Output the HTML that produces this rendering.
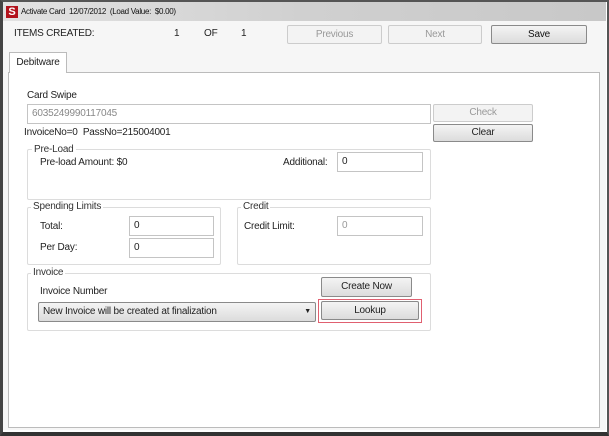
<!DOCTYPE html><html><head><style>
body{margin:0;width:609px;height:436px;overflow:hidden;background:#fff;font-family:"Liberation Sans",sans-serif;font-size:10px;letter-spacing:-0.2px;color:#222;position:relative}
.a{position:absolute;white-space:nowrap}
.btn{position:absolute;border:1px solid #8a8a8a;border-radius:2px;background:linear-gradient(#f4f4f4,#dcdcdc);text-align:center;box-sizing:border-box;font-size:10px}
.dis{border-color:#ccc;background:#f3f3f3;color:#999}
.tb{position:absolute;border:1px solid #c4c4c4;background:#fff;box-sizing:border-box;padding:0 4px;font-size:10px;line-height:18px}
.gb{position:absolute;border:1px solid #dcdcdc;border-radius:2px;box-sizing:border-box}
.gl{position:absolute;background:#fff;padding:0 2px;font-size:10px;color:#333}
</style></head><body>
<div class="a" style="left:0;top:0;width:609px;height:436px;box-sizing:border-box;border:2px solid #555;border-left:3px solid #444;border-bottom:4px solid #333"></div>
<div class="a" style="left:3px;top:2px;width:603px;height:19px;background:linear-gradient(90deg,#e2e2e2,#d0d0d0 50%,#c8c8c8)"></div>
<div class="a" style="left:6px;top:6px;width:12px;height:12px;background:#b2121c;color:#fff;font-weight:bold;font-size:11px;text-align:center;line-height:12px">S</div>
<div class="a" style="left:21px;top:7px;font-size:8px;color:#111;letter-spacing:-0.3px">Activate Card&nbsp; 12/07/2012&nbsp; (Load Value:&nbsp; $0.00)</div>
<div class="a" style="left:3px;top:21px;width:603px;height:26px;background:#f6f6f6"></div>
<div class="a" style="left:14px;top:28px">ITEMS CREATED:</div>
<div class="a" style="left:174px;top:28px">1</div>
<div class="a" style="left:204px;top:28px">OF</div>
<div class="a" style="left:241px;top:28px">1</div>
<div class="btn dis" style="left:287px;top:25px;width:95px;height:19px;line-height:17px">Previous</div>
<div class="btn dis" style="left:388px;top:25px;width:94px;height:19px;line-height:17px">Next</div>
<div class="btn" style="left:491px;top:25px;width:96px;height:19px;line-height:17px;color:#111">Save</div>
<div class="a" style="left:3px;top:47px;width:603px;height:383px;background:#f6f6f6"></div>
<div class="a" style="left:8px;top:72px;width:592px;height:356px;border:1px solid #bbb;box-sizing:border-box;background:#fff"></div>
<div class="a" style="left:9px;top:52px;width:58px;height:21px;border:1px solid #bbb;border-bottom:none;background:#fff;box-sizing:border-box;text-align:center;line-height:19px">Debitware</div>
<div class="a" style="left:27px;top:90px">Card Swipe</div>
<div class="tb" style="left:27px;top:104px;width:404px;height:20px;color:#888">6035249990117045</div>
<div class="btn dis" style="left:433px;top:104px;width:100px;height:18px;line-height:16px">Check</div>
<div class="a" style="left:24px;top:127px;color:#222">InvoiceNo=0&nbsp; PassNo=215004001</div>
<div class="btn" style="left:433px;top:124px;width:100px;height:18px;line-height:16px">Clear</div>
<div class="gb" style="left:27px;top:149px;width:404px;height:51px"></div>
<div class="gl" style="left:32px;top:144px">Pre-Load</div>
<div class="a" style="left:40px;top:157px">Pre-load Amount: $0</div>
<div class="a" style="left:283px;top:157px">Additional:</div>
<div class="tb" style="left:337px;top:152px;width:86px;height:20px">0</div>
<div class="gb" style="left:27px;top:207px;width:194px;height:58px"></div>
<div class="gl" style="left:31px;top:201px">Spending Limits</div>
<div class="a" style="left:40px;top:221px">Total:</div>
<div class="tb" style="left:129px;top:216px;width:85px;height:20px">0</div>
<div class="a" style="left:40px;top:242px">Per Day:</div>
<div class="tb" style="left:129px;top:238px;width:85px;height:20px">0</div>
<div class="gb" style="left:237px;top:207px;width:194px;height:58px"></div>
<div class="gl" style="left:241px;top:201px">Credit</div>
<div class="a" style="left:244px;top:221px">Credit Limit:</div>
<div class="tb" style="left:337px;top:216px;width:86px;height:20px;color:#999">0</div>
<div class="gb" style="left:27px;top:273px;width:404px;height:58px"></div>
<div class="gl" style="left:31px;top:267px">Invoice</div>
<div class="a" style="left:40px;top:286px">Invoice Number</div>
<div class="btn" style="left:38px;top:302px;width:278px;height:20px;line-height:18px;text-align:left;padding-left:4px">New Invoice will be created at finalization<span style="position:absolute;right:4px;font-size:7px">▼</span></div>
<div class="btn" style="left:321px;top:277px;width:91px;height:20px;line-height:18px">Create Now</div>
<div class="a" style="left:318px;top:299px;width:104px;height:24px;border:1px solid #e06070;box-sizing:border-box"></div>
<div class="btn" style="left:321px;top:301px;width:98px;height:19px;line-height:17px">Lookup</div>
</body></html>
